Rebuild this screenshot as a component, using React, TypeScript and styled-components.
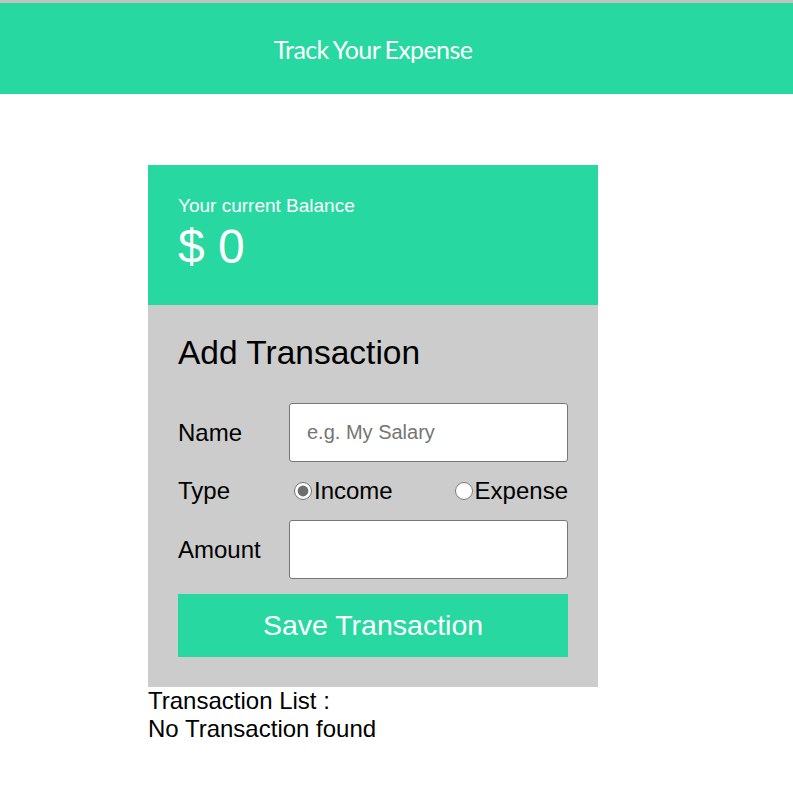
import styled, { createGlobalStyle } from "styled-components";

const GREEN = "#28d8a1";

const GlobalStyle = createGlobalStyle`
  body {
    margin: 0;
    background: #ffffff;
    font-family: "Liberation Sans", Arial, sans-serif;
  }
`;

const Header = styled.header`
  height: 91px;
  border-top: 3px solid #c2c2c2;
  background: ${GREEN};
  display: flex;
  align-items: center;
`;

const HeaderTitle = styled.h1`
  width: 746px;
  margin: 0;
  text-align: center;
  color: #ffffff;
  font-family: "Lato", "Open Sans", sans-serif;
  font-weight: 400;
  font-size: 25px;
  letter-spacing: -0.6px;
  word-spacing: -1px;
`;

const Column = styled.main`
  width: 450px;
  margin: 71px 0 0 148px;
`;

const BalanceCard = styled.section`
  box-sizing: border-box;
  height: 140px;
  padding: 30px 30px 0;
  background: ${GREEN};
  color: #ffffff;
`;

const BalanceLabel = styled.div`
  font-size: 19px;
  line-height: 22px;
`;

const BalanceValue = styled.div`
  margin-top: 2px;
  font-size: 48px;
  line-height: 55px;
`;

const FormCard = styled.section`
  padding: 29px 30px 30px;
  background: #cccccc;
`;

const FormTitle = styled.h2`
  margin: 0 0 31px;
  font-size: 33.5px;
  line-height: 38px;
  font-weight: 400;
  color: #000000;
`;

const Row = styled.div<{ $height: number }>`
  display: flex;
  align-items: center;
  height: ${(p) => p.$height}px;
`;

const Label = styled.label`
  width: 111px;
  flex-shrink: 0;
  font-size: 24px;
  color: #000000;
`;

const TextInput = styled.input`
  flex: 1;
  min-width: 0;
  box-sizing: border-box;
  height: 59px;
  padding: 0 17px;
  border: 1px solid #767676;
  border-radius: 3px;
  background: #ffffff;
  font-family: "Liberation Sans", Arial, sans-serif;
  font-size: 20px;
  color: #000000;
  outline: none;

  &::placeholder {
    color: #757575;
  }
`;

const RadioGroup = styled.div`
  flex: 1;
  display: flex;
  justify-content: space-between;
  align-items: center;
`;

const RadioOption = styled.label`
  display: flex;
  align-items: center;
  font-size: 24px;
  color: #000000;
`;

const Radio = styled.input`
  width: 18px;
  height: 18px;
  margin: 0 2px 0 5px;
  accent-color: #6e6e6e;
`;

const SaveButton = styled.button`
  width: 100%;
  height: 63px;
  margin-top: 15px;
  border: none;
  background: ${GREEN};
  color: #ffffff;
  font-family: "Liberation Sans", Arial, sans-serif;
  font-size: 28.5px;
  cursor: pointer;
`;

const ListText = styled.div`
  font-size: 24px;
  color: #000000;
`;

export default function App() {
  return (
    <>
      <GlobalStyle />
      <Header>
        <HeaderTitle>Track Your Expense</HeaderTitle>
      </Header>
      <Column>
        <BalanceCard>
          <BalanceLabel>Your current Balance</BalanceLabel>
          <BalanceValue>$ 0</BalanceValue>
        </BalanceCard>
        <FormCard>
          <FormTitle>Add Transaction</FormTitle>
          <Row $height={59}>
            <Label htmlFor="name">Name</Label>
            <TextInput id="name" placeholder="e.g. My Salary" />
          </Row>
          <Row $height={58}>
            <Label>Type</Label>
            <RadioGroup>
              <RadioOption>
                <Radio type="radio" name="type" defaultChecked />
                Income
              </RadioOption>
              <RadioOption>
                <Radio type="radio" name="type" />
                Expense
              </RadioOption>
            </RadioGroup>
          </Row>
          <Row $height={59}>
            <Label htmlFor="amount">Amount</Label>
            <TextInput id="amount" type="number" />
          </Row>
          <SaveButton>Save Transaction</SaveButton>
        </FormCard>
        <ListText>Transaction List :</ListText>
        <ListText>No Transaction found</ListText>
      </Column>
    </>
  );
}
